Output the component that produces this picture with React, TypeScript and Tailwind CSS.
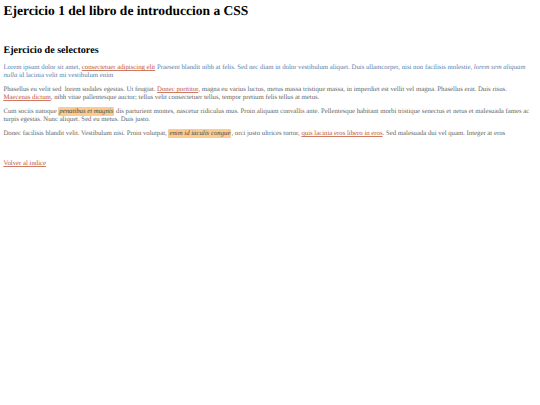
const linkClass = 'text-[#c0553a] underline decoration-[#d07a62]';
const markClass = 'bg-[#fbcb90] italic text-[#444] rounded-[1px] px-[1px] py-[1px]';

export default function App() {
  return (
    <div className="min-h-[405px] bg-white px-[3.4px] pt-[3px] font-['Liberation_Serif',serif] text-[6.75px] leading-[8.1px] text-[#666] [text-rendering:geometricPrecision]">
      <h1 className="text-[13.5px] leading-[16px] font-bold text-black">Ejercicio 1 del libro de introduccion a CSS</h1>

      <h2 className="mt-[26px] text-[10.13px] leading-[12px] font-bold text-black">Ejercicio de selectores</h2>

      <p className="mt-[7px] text-[#5a82ae]">
        Lorem ipsum dolor sit amet, <a className={linkClass}>consectetuer adipiscing elit</a> Praesent blandit nibh at felis. Sed nec diam in dolor vestibulum aliquet. Duis ullamcorper, nisi non facilisis molestie, <em>lorem sem aliquam nulla</em> id lacinia velit mi vestibulum enim
      </p>

      <p className="mt-[5.9px]">
        Phasellus eu velit sed&nbsp; lorem sodales egestas. Ut feugiat. <a className={linkClass}>Donec porttitor</a>, magna eu varius luctus, metus massa tristique massa, in imperdiet est vellit vel magna. Phasellus erat. Duis risus. <a className={`${linkClass} whitespace-nowrap`}>Maecenas dictum</a>, nibh vitae pallentesque auctor; tellus velit consectetuer tellus, tempor pretium felis tellus at metus.
      </p>

      <p className="mt-[5.9px]">
        Cum sociis natoque <span className={markClass}>penatibus et magnis</span> dis parturient montes, nascetur ridiculus mus. Proin aliquam convallis ante. Pellentesque habitant morbi tristique senectus et netus et malesuada fames ac turpis egestas. Nunc aliquet. Sed eu metus. Duis justo.
      </p>

      <p className="mt-[5.9px]">
        Donec facilisis blandit velit. Vestibulum nisi. Proin volutpat, <span className={markClass}>enim id iaculis congue</span>, orci justo ultrices tortor, <a className={linkClass}>quis lacinia eros libero in eros</a>. Sed malesuada dui vel quam. Integer at eros
      </p>

      <p className="mt-[22px]">
        <a className={linkClass}>Volver al indice</a>
      </p>
    </div>
  );
}
